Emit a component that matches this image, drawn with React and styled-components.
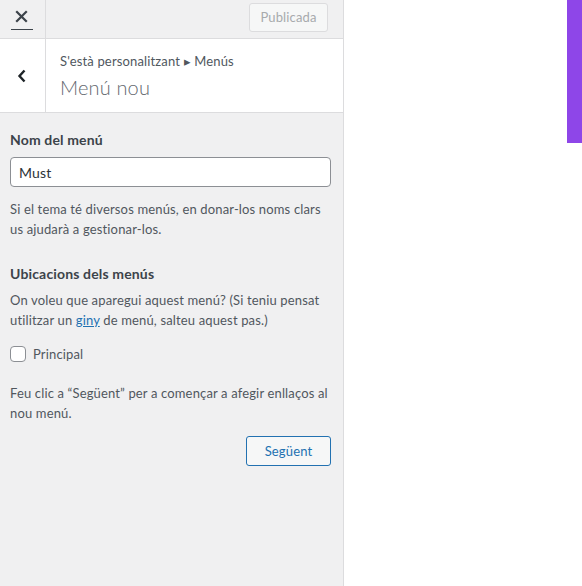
import React from "react";
import styled, { createGlobalStyle } from "styled-components";

const Global = createGlobalStyle`
  html, body { margin: 0; padding: 0; background: #fff; }
  body { font-family: Lato, "Open Sans", sans-serif; letter-spacing: 0.15px; -webkit-font-smoothing: antialiased; }
  #root { height: 586px; }
`;

const Page = styled.div`
  display: flex;
  height: 586px;
  width: 582px;
  overflow: hidden;
`;

const Sidebar = styled.aside`
  width: 343px;
  flex: none;
  background: #f0f0f1;
  border-right: 1px solid #dcdcde;
  display: flex;
  flex-direction: column;
`;

const Header = styled.div`
  height: 38px;
  border-bottom: 1px solid #dcdcde;
  display: flex;
  align-items: center;
`;

const CloseButton = styled.button`
  width: 46px;
  height: 38px;
  flex: none;
  border: 0;
  border-right: 1px solid #dcdcde;
  background: transparent;
  position: relative;
  display: flex;
  align-items: flex-start;
  justify-content: center;
  padding: 10px 2px 0 0;
  box-sizing: border-box;
  &::after {
    content: "";
    position: absolute;
    left: 11px;
    right: 12px;
    top: 29px;
    height: 1px;
    background: #3c434a;
  }
`;

const PublishButton = styled.button`
  margin-left: auto;
  margin-right: 15px;
  height: 29px;
  width: 79px;
  box-sizing: border-box;
  border: 1px solid #dcdcde;
  border-radius: 3px;
  background: #f6f7f7;
  color: #a7aaad;
  font-family: inherit;
  letter-spacing: inherit;
  font-size: 13px;
  padding: 0;
  margin-top: -4px;
`;

const SectionHead = styled.div`
  height: 73px;
  background: #fff;
  border-bottom: 1px solid #dcdcde;
  display: flex;
`;

const BackButton = styled.button`
  width: 46px;
  flex: none;
  border: 0;
  border-right: 1px solid #dcdcde;
  background: transparent;
  display: flex;
  align-items: center;
  justify-content: center;
  padding: 0 2px 0 0;
`;

const Titles = styled.div`
  padding: 12px 0 0 14px;
  display: flex;
  flex-direction: column;
`;

const Crumb = styled.span`
  font-size: 13px;
  line-height: 20px;
  color: #50575e;
`;

const Title = styled.h2`
  margin: 3px 0 0;
  font-size: 20px;
  font-weight: 300;
  line-height: 26px;
  color: #646970;
`;

const Content = styled.div`
  padding: 17px 12px 0 10px;
  display: flex;
  flex-direction: column;
`;

const Label = styled.h3`
  margin: ${(p) => p.$mt || 0}px 0 ${(p) => p.$mb || 7}px;
  font-size: 14px;
  font-weight: 700;
  line-height: 20px;
  color: #3c434a;
`;

const Input = styled.input`
  height: 30px;
  width: 321px;
  box-sizing: border-box;
  border: 1px solid #8c8f94;
  border-radius: 4px;
  padding: 0 8px;
  font-family: inherit;
  letter-spacing: inherit;
  font-size: 14px;
  color: #2c3338;
  background: #fff;
  outline: none;
`;

const Desc = styled.p`
  margin: ${(p) => p.$mt || 0}px 0 0;
  font-size: 13px;
  line-height: 19.5px;
  color: #50575e;
`;

const Link = styled.a`
  color: #2271b1;
  text-decoration: underline;
`;

const CheckRow = styled.label`
  display: flex;
  align-items: center;
  gap: 7px;
  height: 16px;
  margin-top: 16px;
  font-size: 13px;
  color: #50575e;
`;

const Box = styled.span`
  width: 16px;
  height: 16px;
  box-sizing: border-box;
  border: 1px solid #8c8f94;
  border-radius: 4px;
  background: #fff;
`;

const NextRow = styled.div`
  display: flex;
  justify-content: flex-end;
  margin-top: 13px;
`;

const NextButton = styled.button`
  width: 85px;
  height: 30px;
  box-sizing: border-box;
  border: 1px solid #2271b1;
  border-radius: 3px;
  background: #f6f7f7;
  color: #2271b1;
  font-family: inherit;
  letter-spacing: inherit;
  font-size: 13px;
  padding: 0;
`;

const Preview = styled.div`
  flex: 1;
  display: flex;
  justify-content: flex-end;
  background: #fff;
`;

const Accent = styled.div`
  width: 15px;
  height: 143px;
  background: #8e46e8;
`;

export default function App() {
  return (
    <Page>
      <Global />
      <Sidebar>
        <Header>
          <CloseButton aria-label="Tanca">
            <svg width="13" height="13" viewBox="0 0 13 13">
              <path d="M2 2 L11 11 M11 2 L2 11" stroke="#3c434a" strokeWidth="2.2" strokeLinecap="square" />
            </svg>
          </CloseButton>
          <PublishButton disabled>Publicada</PublishButton>
        </Header>
        <SectionHead>
          <BackButton aria-label="Enrere">
            <svg width="10" height="14" viewBox="0 0 10 14">
              <path d="M7.5 1.5 L2.5 7 L7.5 12.5" stroke="#1d2327" strokeWidth="2.4" fill="none" />
            </svg>
          </BackButton>
          <Titles>
            <Crumb>S'està personalitzant ▸ Menús</Crumb>
            <Title>Menú nou</Title>
          </Titles>
        </SectionHead>
        <Content>
          <Label>Nom del menú</Label>
          <Input defaultValue="Must" />
          <Desc $mt={13}>
            Si el tema té diversos menús, en donar-los noms clars us ajudarà a gestionar-los.
          </Desc>
          <Label $mt={25} $mb={7}>Ubicacions dels menús</Label>
          <Desc>
            On voleu que aparegui aquest menú? (Si teniu pensat utilitzar un <Link href="#">giny</Link> de menú, salteu aquest pas.)
          </Desc>
          <CheckRow>
            <Box />
            Principal
          </CheckRow>
          <Desc $mt={22}>Feu clic a “Següent” per a començar a afegir enllaços al nou menú.</Desc>
          <NextRow>
            <NextButton>Següent</NextButton>
          </NextRow>
        </Content>
      </Sidebar>
      <Preview>
        <Accent />
      </Preview>
    </Page>
  );
}
